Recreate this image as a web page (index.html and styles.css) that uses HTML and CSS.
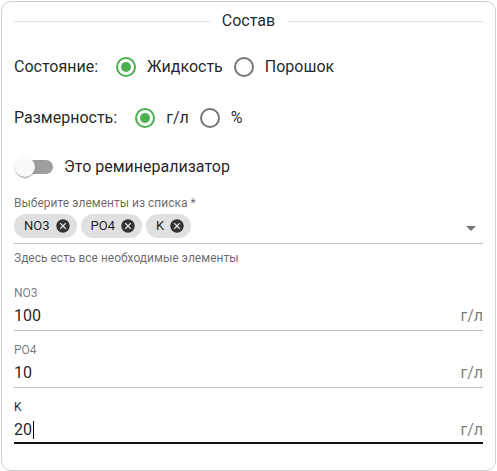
FILE: index.html
```html
<!DOCTYPE html>
<html lang="ru">
<head>
<meta charset="utf-8">
<link rel="stylesheet" href="styles.css">
</head>
<body>
<div class="card">
  <div class="legend">
    <span class="legend-line"></span>
    <span class="legend-text">Состав</span>
    <span class="legend-line"></span>
  </div>

  <div class="row row-state">
    <span class="row-label">Состояние:</span>
    <label class="opt"><span class="radio-box"><span class="radio checked"></span></span><span class="opt-text">Жидкость</span></label>
    <label class="opt"><span class="radio-box"><span class="radio"></span></span><span class="opt-text">Порошок</span></label>
  </div>

  <div class="row row-dim">
    <span class="row-label">Размерность:</span>
    <label class="opt"><span class="radio-box"><span class="radio checked"></span></span><span class="opt-text">г/л</span></label>
    <label class="opt"><span class="radio-box"><span class="radio"></span></span><span class="opt-text">%</span></label>
  </div>

  <div class="row row-switch">
    <span class="switch"><span class="switch-track"></span><span class="switch-thumb"></span></span>
    <span class="switch-text">Это реминерализатор</span>
  </div>

  <div class="select">
    <div class="select-label">Выберите элементы из списка *</div>
    <div class="select-input">
      <span class="chip"><span class="chip-text">NO3</span><svg class="chip-del" viewBox="0 0 24 24"><path d="M12 2C6.47 2 2 6.47 2 12s4.47 10 10 10 10-4.47 10-10S17.53 2 12 2zm5 13.59L15.59 17 12 13.41 8.41 17 7 15.59 10.59 12 7 8.41 8.41 7 12 10.59 15.59 7 17 8.41 13.41 12 17 15.59z"/></svg></span>
      <span class="chip"><span class="chip-text">PO4</span><svg class="chip-del" viewBox="0 0 24 24"><path d="M12 2C6.47 2 2 6.47 2 12s4.47 10 10 10 10-4.47 10-10S17.53 2 12 2zm5 13.59L15.59 17 12 13.41 8.41 17 7 15.59 10.59 12 7 8.41 8.41 7 12 10.59 15.59 7 17 8.41 13.41 12 17 15.59z"/></svg></span>
      <span class="chip"><span class="chip-text">K</span><svg class="chip-del" viewBox="0 0 24 24"><path d="M12 2C6.47 2 2 6.47 2 12s4.47 10 10 10 10-4.47 10-10S17.53 2 12 2zm5 13.59L15.59 17 12 13.41 8.41 17 7 15.59 10.59 12 7 8.41 8.41 7 12 10.59 15.59 7 17 8.41 13.41 12 17 15.59z"/></svg></span>
      <svg class="arrow" viewBox="0 0 24 24"><path d="M7 10l5 5 5-5z"/></svg>
    </div>
    <div class="helper">Здесь есть все необходимые элементы</div>
  </div>

  <div class="field first">
    <div class="field-label">NO3</div>
    <div class="field-input"><span class="value">100</span><span class="unit">г/л</span></div>
  </div>
  <div class="field">
    <div class="field-label">PO4</div>
    <div class="field-input"><span class="value">10</span><span class="unit">г/л</span></div>
  </div>
  <div class="field focused">
    <div class="field-label">K</div>
    <div class="field-input"><span class="value">20<span class="caret"></span></span><span class="unit">г/л</span></div>
  </div>
</div>
</body>
</html>
```

FILE: styles.css
```css
* { box-sizing: border-box; }
html, body { margin: 0; padding: 0; background: #fff; }
body {
  font-family: Roboto, "Noto Sans", "Liberation Sans", sans-serif;
  color: rgba(0,0,0,0.87);
  font-size: 16px;
}
.card {
  margin: 1px 0 0 1px;
  width: 495px;
  height: 470px;
  border: 1px solid #cfcfcf;
  border-radius: 10px;
  padding: 7px 12px 0 12px;
  display: flex;
  flex-direction: column;
}
.legend {
  height: 24px;
  display: flex;
  align-items: center;
  gap: 12px;
}
.legend-line { flex: 1; height: 1px; background: #e0e0e0; }
.legend-text { font-size: 16px; line-height: 24px; }

.row { display: flex; align-items: center; height: 42px; }
.row-state { margin-top: 13px; }
.row-dim { margin-top: 9px; }
.row-label { margin-right: 7px; line-height: 24px; }
.opt { display: flex; align-items: center; cursor: pointer; }
.radio-box { width: 42px; height: 42px; display: flex; align-items: center; justify-content: center; }
.radio {
  width: 20px; height: 20px; border-radius: 50%;
  border: 2px solid #757575;
  display: flex; align-items: center; justify-content: center;
}
.radio.checked { border-color: #4caf50; }
.radio.checked::after {
  content: ""; width: 10px; height: 10px; border-radius: 50%; background: #4caf50;
}
.opt-text { line-height: 24px; }

.row-switch { margin-top: 9px; height: 38px; }
.switch { position: relative; width: 50px; height: 38px; display: flex; align-items: center; }
.switch-track {
  margin-left: 3px;
  width: 36px; height: 14px; border-radius: 7px; background: #9e9e9e;
}
.switch-thumb {
  position: absolute; left: 1px; top: 9px;
  width: 20px; height: 20px; border-radius: 50%;
  background: #fafafa;
  box-shadow: 0 2px 1px -1px rgba(0,0,0,0.2), 0 1px 1px 0 rgba(0,0,0,0.14), 0 1px 3px 0 rgba(0,0,0,0.12);
}
.switch-text { margin-left: 0; line-height: 24px; }

.select { margin-top: 9px; }
.select-label { font-size: 12px; line-height: 16px; color: rgba(0,0,0,0.6); }
.select-input {
  margin-top: 3px;
  display: flex; align-items: center; gap: 4px;
  padding-bottom: 5px;
  border-bottom: 1px solid #bdbdbd;
}
.chip {
  height: 24px; border-radius: 12px; background: #e0e0e0;
  display: inline-flex; align-items: center;
  padding-left: 10px;
  font-size: 13px;
}
.chip-text { line-height: 16px; }
.chip-del { width: 16px; height: 16px; fill: #333; margin: 0 6px 0 5px; }
.arrow { width: 24px; height: 24px; fill: #757575; margin: 2px 0 -2px auto; }
.helper { margin-top: 6px; font-size: 12px; line-height: 16px; color: rgba(0,0,0,0.6); }

.field { margin-top: 11px; }
.field.first { margin-top: 19px; }
.field-label { font-size: 12px; line-height: 16px; color: rgba(0,0,0,0.54); }
.field-input {
  margin-top: 3px;
  display: flex; align-items: center; justify-content: space-between;
  line-height: 24px;
  padding-bottom: 2px;
  border-bottom: 1px solid #bdbdbd;
}
.field.focused .field-label { color: rgba(0,0,0,0.87); }
.field.focused .field-input { padding-bottom: 0; border-bottom: 2px solid #111; }
.value { display: inline-flex; align-items: center; }
.caret { display: inline-block; width: 1px; height: 18px; background: #000; margin-left: 1px; }
.unit { color: rgba(0,0,0,0.54); }
```
